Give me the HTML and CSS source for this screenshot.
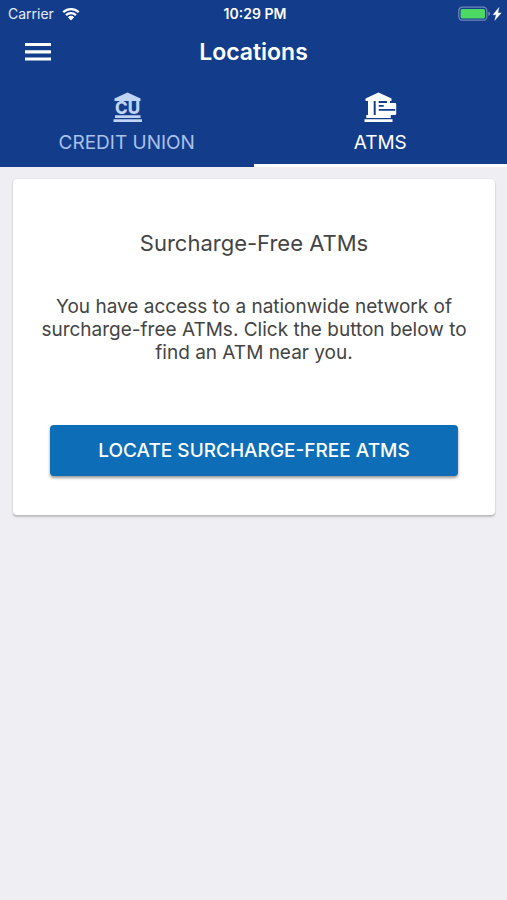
FILE: index.html
```html
<!DOCTYPE html>
<html lang="en">
<head>
<meta charset="utf-8">
<meta name="viewport" content="width=device-width, initial-scale=1">
<title>Locations</title>
<link rel="stylesheet" href="styles.css">
</head>
<body>
<header class="header">
  <div class="status">
    <div class="status-left">
      <span>Carrier</span>
      <svg class="wifi" width="18" height="14" viewBox="0 0 18 14" aria-hidden="true">
        <path d="M1.2 5.2a11.2 11.2 0 0 1 15.6 0M4 8.2a7.2 7.2 0 0 1 10 0" fill="none" stroke="currentColor" stroke-width="2.3"/>
        <path d="M5.9 10.2a4.5 4.5 0 0 1 6.2 0L9 13.4z" fill="currentColor"/>
      </svg>
    </div>
    <time class="clock">10:29 PM</time>
    <div class="status-right">
      <svg width="44" height="16" viewBox="0 0 44 16" aria-hidden="true">
        <rect x="0.8" y="1.2" width="28" height="13" rx="3.5" fill="none" stroke="#6d86bd" stroke-width="1.3"/>
        <rect x="2.6" y="3" width="24.4" height="9.400" rx="1.5" fill="#4cd964"/>
        <path d="M30.3 5.500q2 .6 2 2.200t-2 2.200z" fill="#6d86bd"/>
        <path d="M41 1.500l-6 7.200h3.200l-1.400 5.600 6.400-7.400h-3.400z" fill="#fff" stroke="#fff" stroke-width=".4"/>
      </svg>
    </div>
  </div>
  <div class="toolbar">
    <button class="menu" type="button" aria-label="Menu">
      <svg width="26" height="20" viewBox="0 0 26 20" aria-hidden="true">
        <path d="M0 2.500h26M0 9.800h26M0 17h26" stroke="currentColor" stroke-width="3.200"/>
      </svg>
    </button>
    <h1 class="title">Locations</h1>
  </div>
  <nav class="tabs">
    <a class="tab" href="#credit-union">
      <svg class="tab-icon" width="32" height="32" viewBox="0 0 32 32" aria-hidden="true">
        <path d="M16.500 1.500L29.500 7.500v2.500h-26V7.500z" fill="currentColor"/>
        <text class="mark" x="16.500" y="23" text-anchor="middle" fill="currentColor">CU</text>
        <path d="M4 24.300h25.500v2.800H4zM2.500 28.200h28.500v2.900h-28.500z" fill="currentColor"/>
      </svg>
      <span>CREDIT UNION</span>
    </a>
    <a class="tab active" href="#atms" aria-current="page">
      <svg class="tab-icon" width="32" height="32" viewBox="0 0 32 32" aria-hidden="true">
        <path d="M14.500 1.500L27.500 7.500v2.500h-26V7.500z" fill="currentColor"/>
        <path d="M4 10h5.700v14.500H4zM11.700 10h3v3h-3zM23 10h3v3h-3z" fill="currentColor"/>
        <path fill-rule="evenodd" d="M12.500 12H31q1.200 0 1.200 1.200v9.600q0 1.200-1.200 1.200H11.700V12.800q0-.8.8-.8zM14.700 14v1.700h5V14zM14.700 18v1.700h16.500V18z" fill="currentColor"/>
        <path d="M2.300 24h24.500v3H2.300zM0.500 28.200h28v2.900h-28z" fill="currentColor"/>
      </svg>
      <span>ATMS</span>
    </a>
  </nav>
</header>
<main class="content">
  <section class="card" id="atms">
    <h2 class="heading">Surcharge-Free ATMs</h2>
    <p class="copy">You have access to a nationwide network of surcharge-free ATMs. Click the button below to find an ATM near you.</p>
    <button class="action" type="button">LOCATE SURCHARGE-FREE ATMS</button>
  </section>
</main>
</body>
</html>
```

FILE: styles.css
```css
* {
  box-sizing: border-box;
}

body {
  margin: 0;
  min-height: 100vh;
  background: #eeeef3;
  color: #444;
  font-family: Inter, "Liberation Sans", sans-serif;
}

.header {
  background: #133c8b;
  color: #fff;
}

.status {
  display: grid;
  grid-template-columns: 1fr auto 1fr;
  align-items: center;
  height: 26px;
  padding: 1px 5px 0 8px;
  font-size: 14px;
  line-height: 25px;
}

.status-left {
  display: flex;
  align-items: center;
  gap: 8px;
  color: #e6edfa;
}

.wifi {
  color: #fff;
}

.clock {
  font-weight: 600;
}

.status-right {
  display: flex;
  justify-content: flex-end;
}

.toolbar {
  display: grid;
  grid-template-columns: 76px 1fr 76px;
  align-items: center;
  height: 52px;
}

.menu {
  display: flex;
  justify-content: center;
  padding: 12px;
  border: 0;
  background: none;
  color: #fff;
}

.title {
  margin: 0;
  font-size: 23px;
  font-weight: 600;
  line-height: 28px;
  text-align: center;
}

.tabs {
  display: flex;
  height: 89px;
}

.tab {
  flex: 1;
  display: flex;
  flex-direction: column;
  align-items: center;
  gap: 8px;
  padding-top: 13px;
  color: #a9c2ea;
  font-size: 19px;
  line-height: 24px;
  text-decoration: none;
}

.tab-icon {
  color: #c0d4f5;
  overflow: visible;
}

.tab.active {
  border-bottom: 3px solid #fff;
}

.tab.active,
.active .tab-icon {
  color: #fff;
}

.mark {
  font-size: 17px;
  font-weight: 800;
}

.content {
  padding: 12px 12px 12px 13px;
}

.card {
  padding: 48px 25px 39px;
  border-radius: 4px;
  background: #fff;
  box-shadow: 0 2px 2px rgba(0, 0, 0, 0.2), 0 0 2px rgba(0, 0, 0, 0.1);
  text-align: center;
}

.heading {
  margin: 0 0 36px;
  font-size: 22px;
  font-weight: 400;
  line-height: 32px;
}

.copy {
  margin: 0 0 61px;
  font-size: 19px;
  line-height: 23px;
}

.action {
  display: block;
  width: calc(100% - 24px);
  height: 51px;
  margin: 0 12px;
  border: 0;
  border-radius: 4px;
  background: #0d6db7;
  box-shadow: 0 2px 3px rgba(0, 0, 0, 0.4);
  color: #fff;
  font-family: inherit;
  font-size: 19px;
  font-weight: 500;
}
```
